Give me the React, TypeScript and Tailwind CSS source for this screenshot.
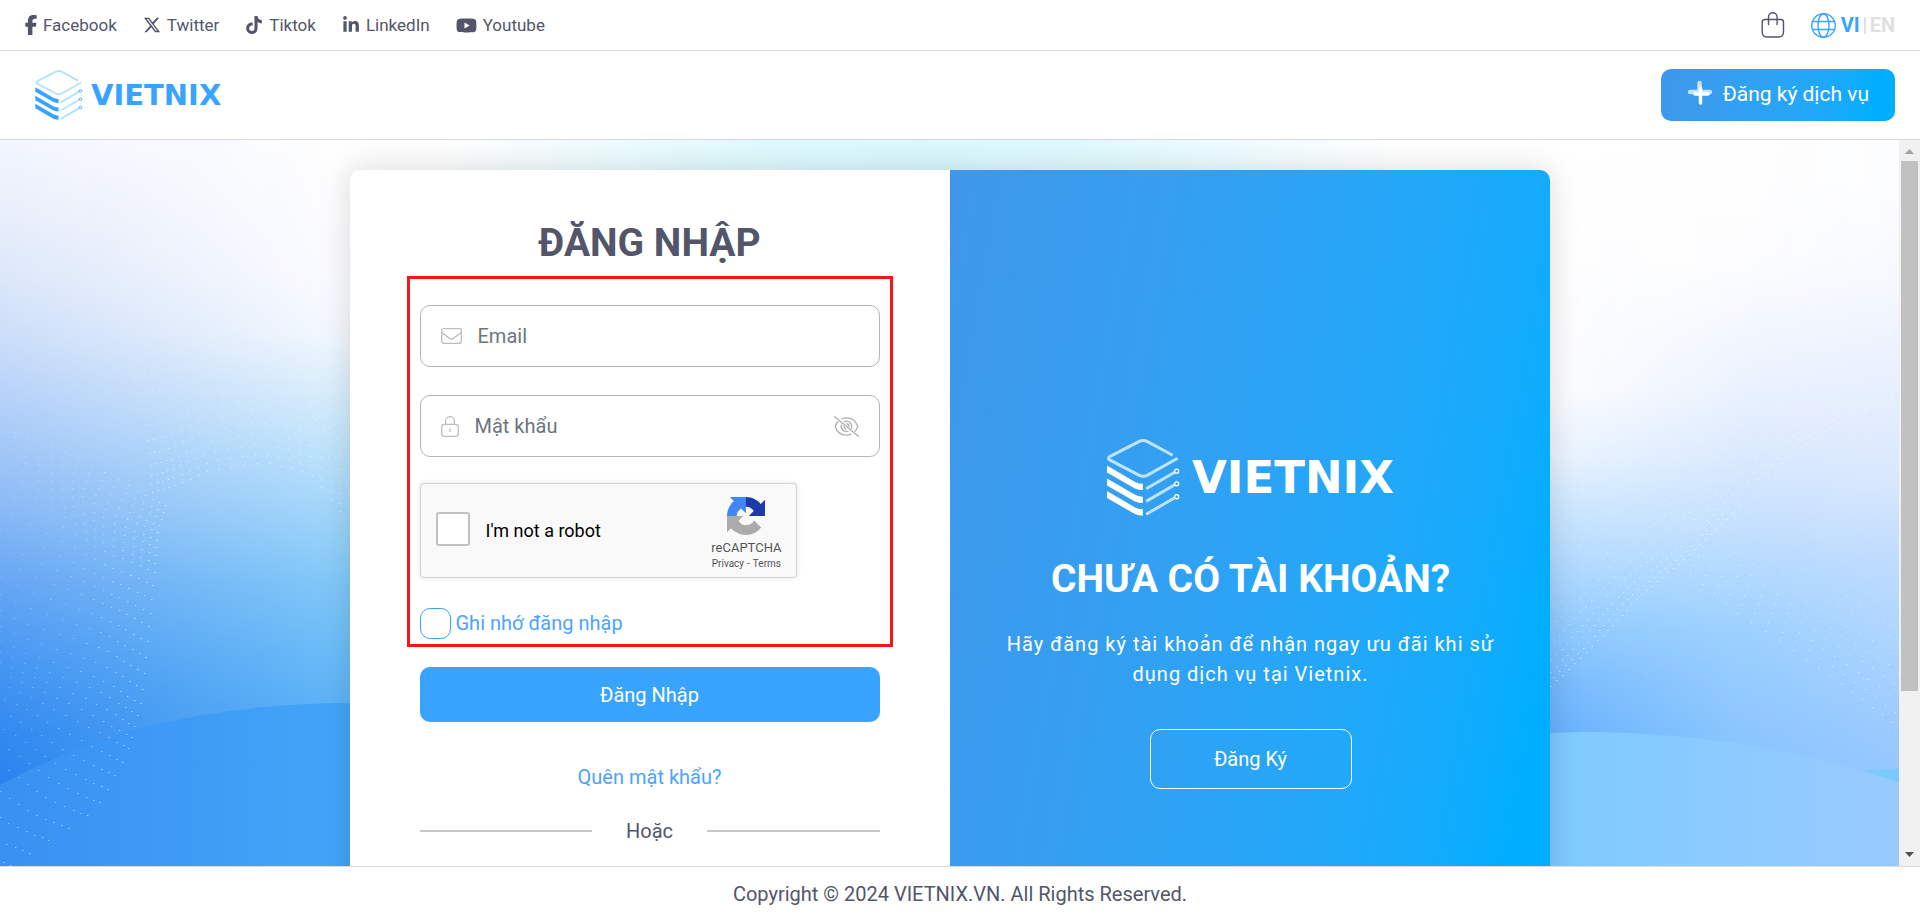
import React from "react";
import { FaFacebookF, FaLinkedinIn, FaTiktok, FaXTwitter, FaYoutube } from "react-icons/fa6";

type Point = [number, number];
type Dot = { x: number; y: number; o: number };

const socials = [
  { label: "Facebook", icon: <FaFacebookF className="-mx-1 size-5" /> },
  { label: "Twitter", icon: <FaXTwitter className="size-[18px]" /> },
  { label: "Tiktok", icon: <FaTiktok className="size-[18px]" /> },
  { label: "LinkedIn", icon: <FaLinkedinIn className="size-[18px]" /> },
  { label: "Youtube", icon: <FaYoutube className="size-[21px]" /> },
];

/** Linear interpolation along a polyline, t in 0..1. */
function along(points: Point[], t: number): Point {
  const f = t * (points.length - 1);
  const i = Math.min(Math.floor(f), points.length - 2);
  const r = f - i;
  return [
    points[i][0] + (points[i + 1][0] - points[i][0]) * r,
    points[i][1] + (points[i + 1][1] - points[i][1]) * r,
  ];
}

/** Fans rows of dots out from an edge curve, in the direction (dx, dy). */
function mesh(edge: Point[], count: number, rows: number, dx: number, dy: number, grow: number): Dot[] {
  const dots: Dot[] = [];
  for (let c = 0; c < count; c++) {
    const [ex, ey] = along(edge, c / (count - 1));
    for (let r = 0; r < rows; r++) {
      const d = r + grow * r * r;
      const sway = (r / rows) * 10;
      dots.push({
        x: ex + dx * d + Math.sin(c / 3 + r / 2) * sway,
        y: ey + dy * d + Math.cos(c / 4 - r / 3) * sway,
        o: 0.5 * (1 - r / rows) + 0.08,
      });
    }
  }
  return dots;
}

const dots: Dot[] = [
  ...mesh([[165, 365], [156, 395], [154, 430], [148, 490], [141, 560], [128, 610], [95, 670], [10, 725]], 32, 18, -6, -3, 0.06),
  ...mesh([[152, 352], [175, 345], [210, 330], [265, 322], [310, 333], [350, 383]], 22, 16, -1, -8, 0.06),
  ...mesh([[1550, 546], [1600, 498], [1640, 455], [1685, 418], [1730, 375], [1790, 315], [1840, 280], [1899, 252]], 60, 11, -3, -4, 0.15),
  ...mesh([[1690, 434], [1740, 475], [1800, 515], [1850, 550], [1892, 582]], 18, 14, 3, -9, 0.03),
];

function Stops({ list }: { list: [number, string][] }) {
  return (
    <>
      {list.map(([y, color]) => (
        <stop key={y} offset={y / 726} stopColor={color} />
      ))}
    </>
  );
}

function Backdrop() {
  return (
    <svg
      className="absolute inset-0 size-full"
      viewBox="0 0 1899 726"
      preserveAspectRatio="none"
      aria-hidden="true"
    >
      <defs>
        <linearGradient id="l0" x1="0" y1="0" x2="0" y2="726" gradientUnits="userSpaceOnUse">
          <Stops list={[[0, "#f3f6ff"], [66, "#eaeffb"], [141, "#dbe7fa"], [207, "#c8dcf9"], [292, "#a9cbf8"], [368, "#8bbaf6"], [444, "#66a6f4"], [519, "#4897f3"], [595, "#3289f0"], [645, "#2a83ed"]]} />
        </linearGradient>
        <linearGradient id="l1" x1="0" y1="0" x2="0" y2="726" gradientUnits="userSpaceOnUse">
          <Stops list={[[0, "#fefefe"], [130, "#fcfcff"], [192, "#f5f9fe"], [242, "#dff0fc"], [302, "#c3e6fb"], [368, "#a5d8fa"], [444, "#82c9f8"], [519, "#6abcf7"], [563, "#60b5f6"]]} />
        </linearGradient>
        <linearGradient id="r0" x1="0" y1="0" x2="0" y2="726" gradientUnits="userSpaceOnUse">
          <Stops list={[[0, "#ffffff"], [250, "#fdfdff"], [318, "#eaf4fe"], [368, "#cde8ff"], [444, "#a8d6ff"], [494, "#8dc9ff"], [544, "#78bbfe"], [590, "#68b3fe"]]} />
        </linearGradient>
        <linearGradient id="r1" x1="0" y1="0" x2="0" y2="726" gradientUnits="userSpaceOnUse">
          <Stops list={[[0, "#fefefe"], [116, "#fdfdff"], [242, "#ecf3fe"], [318, "#dae9fe"], [393, "#c2dffe"], [444, "#aed8ff"], [494, "#9cd0ff"], [595, "#8bc6ff"]]} />
        </linearGradient>
        <linearGradient id="r2" x1="0" y1="0" x2="0" y2="726" gradientUnits="userSpaceOnUse">
          <Stops list={[[40, "#fcfdff"], [141, "#f5f8fe"], [242, "#e7effe"], [343, "#d8e7fe"], [418, "#c0dbff"], [494, "#aed5ff"], [595, "#9bc9ff"], [630, "#96c6ff"]]} />
        </linearGradient>
        <linearGradient id="fadeL" x1="0" y1="0" x2="350" y2="0" gradientUnits="userSpaceOnUse">
          <stop offset="0" stopColor="#000" />
          <stop offset="1" stopColor="#fff" />
        </linearGradient>
        <linearGradient id="fadeM" x1="1550" y1="0" x2="1740" y2="0" gradientUnits="userSpaceOnUse">
          <stop offset="0" stopColor="#000" />
          <stop offset="1" stopColor="#fff" />
        </linearGradient>
        <linearGradient id="fadeR" x1="1740" y1="0" x2="1899" y2="0" gradientUnits="userSpaceOnUse">
          <stop offset="0" stopColor="#000" />
          <stop offset="1" stopColor="#fff" />
        </linearGradient>
        <mask id="mL"><rect width="950" height="726" fill="url(#fadeL)" /></mask>
        <mask id="mM"><rect x="1550" width="349" height="726" fill="url(#fadeM)" /></mask>
        <mask id="mR"><rect x="1740" width="159" height="726" fill="url(#fadeR)" /></mask>
        <radialGradient id="glow" cx="920" cy="60" r="480" gradientUnits="userSpaceOnUse">
          <stop offset="0" stopColor="#d8f8fe" />
          <stop offset=".35" stopColor="#dffafe" />
          <stop offset="1" stopColor="#dffafe" stopOpacity="0" />
        </radialGradient>
        <linearGradient id="hillL" x1="0" y1="0" x2="1" y2="0">
          <stop offset="0" stopColor="#3a90f2" />
          <stop offset="1" stopColor="#42a5f8" />
        </linearGradient>
        <linearGradient id="hillR" x1="0" y1="0" x2="1" y2="0">
          <stop offset="0" stopColor="#7ecbff" />
          <stop offset="1" stopColor="#99caff" />
        </linearGradient>
      </defs>
      <rect width="950" height="726" fill="url(#l0)" />
      <rect width="950" height="726" fill="url(#l1)" mask="url(#mL)" />
      <rect x="950" width="949" height="726" fill="url(#r0)" />
      <rect x="1550" width="349" height="726" fill="url(#r1)" mask="url(#mM)" />
      <rect x="1740" width="159" height="726" fill="url(#r2)" mask="url(#mR)" />
      <rect x="400" width="1050" height="240" fill="url(#glow)" />
      <path d="M0 645 C35 627 80 604 140 588 C210 571 280 563 350 563 V726 H0 Z" fill="url(#hillL)" />
      <path d="M1860 631 Q1880 629 1899 629 V726 H1860 Z" fill="#7ac9ff" />
      <path d="M1550 593 C1640 588 1740 602 1800 615 Q1860 628 1899 643 V726 H1550 Z" fill="url(#hillR)" />
      {dots.map((d, i) => (
        <rect key={i} x={Math.round(d.x)} y={Math.round(d.y)} width="1.4" height="1" fill="#fff" opacity={d.o} />
      ))}
    </svg>
  );
}

function Cube({ className, line, fill }: { className: string; line: string; fill: string }) {
  return (
    <svg className={className} viewBox="0 0 220 232" fill="none" aria-hidden="true">
      <g stroke={line} strokeWidth="9">
        <path d="M198 49 L122 8 Q109 1 96 8 L8 53 Q1 58 8 63 L96 109 Q109 116 122 109 L213 58" />
        <path d="M118 150 L204 100 M118 188 L204 138 M118 227 L204 177" />
      </g>
      <g stroke={fill} strokeWidth="4">
        <circle cx="210" cy="97" r="6" />
        <circle cx="210" cy="135" r="6" />
        <circle cx="210" cy="174" r="6" />
      </g>
      <g fill={fill}>
        <path d="M0 80 L86 130 Q97 135 108 135 V154 Q96 154 84 149 L0 101 Z" />
        <path d="M0 119 L86 169 Q97 174 108 174 V193 Q96 193 84 188 L0 140 Z" />
        <path d="M0 157 L86 207 Q97 212 108 212 V231 Q96 231 84 226 L0 178 Z" />
      </g>
    </svg>
  );
}

function RecaptchaMark() {
  return (
    <svg className="size-[38px]" viewBox="0 0 64 64" aria-hidden="true">
      <path fill="#1c3aa9" d="M64 31.955l-.033-1.37V4.687l-7.16 7.16C50.948 4.674 42.033.093 32.05.093c-10.4 0-19.622 4.96-25.458 12.64l11.736 11.86a15.55 15.55 0 0 1 4.754-5.334c2.05-1.6 4.952-2.906 8.968-2.906.485 0 .86.057 1.135.163 4.976.393 9.288 3.14 11.828 7.124l-8.307 8.307L64 31.953" />
      <path fill="#4285f4" d="M31.862.094l-1.37.033H4.594l7.16 7.16C4.58 13.147 0 22.06 0 32.046c0 10.4 4.96 19.622 12.64 25.458L24.5 45.768a15.55 15.55 0 0 1-5.334-4.754c-1.6-2.05-2.906-4.952-2.906-8.968 0-.485.057-.86.163-1.135.393-4.976 3.14-9.288 7.124-11.828l8.307 8.307L31.86.095" />
      <path fill="#ababab" d="M.001 32.045l.033 1.37v25.898l7.16-7.16c5.86 7.173 14.774 11.754 24.76 11.754 10.4 0 19.622-4.96 25.458-12.64l-11.736-11.86a15.55 15.55 0 0 1-4.754 5.334c-2.05 1.6-4.952 2.906-8.968 2.906-.485 0-.86-.057-1.135-.163-4.976-.393-9.288-3.14-11.828-7.124l8.307-8.307c-10.522.04-22.4.066-27.295-.005" />
    </svg>
  );
}

function TopBar() {
  return (
    <div className="flex h-[51px] shrink-0 items-center justify-between border-b border-[#dcdcdc] px-[25px]">
      <nav className="flex items-center gap-[26px]">
        {socials.map((s) => (
          <a key={s.label} href="#" className="flex items-center gap-[6px] text-[17px] leading-6">
            {s.icon}
            <span>{s.label}</span>
          </a>
        ))}
      </nav>
      <div className="flex items-center gap-[26px]">
        <button type="button" aria-label="Cart">
          <svg className="h-[26px] w-6" viewBox="0 0 24 26" fill="none" stroke="currentColor" strokeWidth="1.4" strokeLinecap="round">
            <path d="M4 7.5 H20 Q22.5 7.500 22.500 10 V20 Q22.500 25 17.500 25 H6 Q1.200 25 1.200 20 V10 Q1.200 7.500 4 7.500 Z" />
            <path d="M7.500 12.500 V5 A4.300 4.300 0 0 1 16.100 5 V12.500" />
          </svg>
        </button>
        <div className="flex items-center gap-[5px] text-xl leading-6 font-bold">
          <svg className="size-[25px] text-[#38a4ff]" viewBox="0 0 25 25" fill="none" stroke="currentColor" strokeWidth="1.400" aria-hidden="true">
            <circle cx="12.500" cy="12.500" r="11.800" />
            <ellipse cx="12.500" cy="12.500" rx="5.500" ry="11.800" />
            <path d="M1.500 8.500 H23.500 M1.500 16.500 H23.500" />
          </svg>
          <div className="flex items-center gap-1">
            <a href="#" className="text-[#38a4ff]">VI</a>
            <span className="h-[17px] w-[2px] bg-[#e0e0e0]" />
            <a href="#" className="text-[#e0e0e0]">EN</a>
          </div>
        </div>
      </div>
    </div>
  );
}

function Header() {
  return (
    <header className="flex h-[89px] shrink-0 items-center justify-between border-b border-[#dcdcdc] pr-[25px] pl-[35px]">
      <a href="#" className="flex items-center gap-2 text-[#38a4ff]">
        <Cube className="h-[50px] w-12" line="#b5e3ff" fill="#38a4ff" />
        <span className="font-['DejaVu_Sans',sans-serif] text-[29px] leading-8 font-bold">VIETNIX</span>
      </a>
      <button
        type="button"
        className="flex h-[52px] items-center gap-[10px] rounded-[10px] bg-linear-100 from-[#3f97ea] to-[#00aeff] to-90% px-[26px] text-[21px] text-white"
      >
        <svg className="-mt-1 size-[26px]" viewBox="0 0 26 26" fill="none" strokeWidth="4.500" strokeLinecap="round" aria-hidden="true">
          <path d="M12.500 3 V13 M3 12 H13 M13 12 H23" stroke="#c5e3ff" />
          <path d="M13.500 8 V23 M8 14 H21" stroke="#fff" strokeWidth="3.500" />
        </svg>
        <span>Đăng ký dịch vụ</span>
      </button>
    </header>
  );
}

function Fields() {
  return (
    <div className="relative flex flex-col">
      <div className="pointer-events-none absolute -inset-x-[13px] -top-[29px] -bottom-2 border-[3px] border-[#fb1414]" />
      <label className="flex h-[62px] items-center gap-4 rounded-[10px] border border-[#b5b5b5] px-5">
        <svg className="h-4 w-[21px] shrink-0 text-[#bdbdbd]" viewBox="0 0 21 16" fill="none" stroke="currentColor" strokeWidth="1.300" aria-hidden="true">
          <rect x=".7" y=".7" width="19.600" height="14.600" rx="2" />
          <path d="M.7 4.500 L9 10.600 Q10.500 11.600 12 10.600 L20.300 4.500" />
        </svg>
        <input type="email" aria-label="Email" placeholder="Email" className="min-w-0 flex-1 bg-transparent text-xl outline-none placeholder:text-[#6c757d]" />
      </label>
      <div className="mt-7 flex h-[62px] items-center gap-4 rounded-[10px] border border-[#b5b5b5] px-5">
        <svg className="h-[21px] w-[18px] shrink-0 text-[#bdbdbd]" viewBox="0 0 18 21" fill="none" stroke="currentColor" strokeWidth="1.300" strokeLinecap="round" aria-hidden="true">
          <rect x=".7" y="8.300" width="16.600" height="12" rx="2.500" />
          <path d="M4.600 8.300 V5 A4.400 4.400 0 0 1 13.400 5 V8.300 M9 12.800 V15.600" />
        </svg>
        <input type="password" aria-label="Mật khẩu" placeholder="Mật khẩu" className="min-w-0 flex-1 bg-transparent text-xl outline-none placeholder:text-[#6c757d]" />
        <button type="button" aria-label="Hiện mật khẩu" className="text-[#b0b0b0]">
          <svg className="h-[21px] w-[25px]" viewBox="0 0 25 21" fill="none" stroke="currentColor" strokeWidth="1.300" strokeLinecap="round">
            <path d="M.7.800 L24.300 20.200" />
            <path d="M3.800 5.800 Q1.800 8 1.200 10.500 C3 16 7.500 19.200 12.500 19.200 Q15 19.200 17.300 18" />
            <path d="M8 2.600 Q10.200 1.800 12.500 1.800 C17.500 1.800 22 5 23.800 10.500 Q23 13 21 15.300" />
            <path d="M7.400 8.800 A5.300 5.300 0 0 0 14 15.300 M10.300 5.700 A5.300 5.300 0 0 1 17.400 12.400" />
            <path d="M12.500 7.800 Q15.200 8 15.200 10.500 M10 10.500 Q10.200 12.500 12 13" />
          </svg>
        </button>
      </div>
      <div className="mt-[26px] flex h-[95px] w-[377px] items-center rounded-[4px] border border-[#d3d3d3] bg-[#f9f9f9] pr-[14px] pl-[15px] shadow-[0_0_4px_1px_rgba(0,0,0,0.08)]">
        <label className="flex flex-1 items-center gap-4 pb-1 text-lg leading-5 text-black">
          <input type="checkbox" className="size-[34px] appearance-none rounded-[3px] border-2 border-[#c1c1c1] bg-white" />
          <span className="pt-1">I'm not a robot</span>
        </label>
        <div className="flex flex-col items-center pt-2 text-[#555555]">
          <RecaptchaMark />
          <span className="mt-[5px] text-[13px] leading-4">reCAPTCHA</span>
          <span className="flex gap-[3px] text-[10px] leading-4">
            <a href="#">Privacy</a>
            <span>-</span>
            <a href="#">Terms</a>
          </span>
        </div>
      </div>
      <label className="mt-[30px] flex items-center gap-[5px] self-start text-xl leading-[31px] text-[#4da3ff]">
        <input type="checkbox" className="size-[31px] appearance-none rounded-[10px] border border-[#38a4ff] bg-white" />
        <span>Ghi nhớ đăng nhập</span>
      </label>
    </div>
  );
}

function LoginCard() {
  return (
    <section className="relative grid min-h-[888px] w-full max-w-[1200px] grid-cols-2 overflow-hidden rounded-[10px] bg-white shadow-[0_0_32px_rgba(0,0,0,0.15)]">
      <form className="flex flex-col px-[70px] pt-12" onSubmit={(e) => e.preventDefault()}>
        <h1 className="mb-[37px] text-center text-[39px] leading-[50px] font-bold">ĐĂNG NHẬP</h1>
        <Fields />
        <button type="submit" className="mt-7 h-[55px] rounded-[10px] bg-[#38a4ff] text-xl text-white">
          Đăng Nhập
        </button>
        <a href="#" className="mt-10 self-center text-xl leading-[30px] text-[#4da3ff]">Quên mật khẩu?</a>
        <div className="mt-6 flex items-center gap-[34px] text-xl leading-[30px]">
          <span className="h-[2px] flex-1 bg-[#c8c8c8]" />
          <span>Hoặc</span>
          <span className="h-[2px] flex-1 bg-[#c8c8c8]" />
        </div>
      </form>
      <div className="flex flex-col items-center justify-center bg-linear-100 from-[#3f97ea] to-[#00aeff] to-90% pr-12 pl-[50px] text-white">
        <div className="flex items-center gap-3">
          <Cube className="h-[77px] w-[73px]" line="#bfe3fd" fill="#ffffff" />
          <span className="font-['DejaVu_Sans',sans-serif] text-[45px] leading-[50px] font-bold">VIETNIX</span>
        </div>
        <h2 className="mt-[38px] text-center text-[39px] leading-[50px] font-bold">CHƯA CÓ TÀI KHOẢN?</h2>
        <p className="mt-[25px] text-center text-xl leading-[30px] tracking-wider">
          Hãy đăng ký tài khoản để nhận ngay ưu đãi khi sử dụng dịch vụ tại Vietnix.
        </p>
        <button type="button" className="mt-10 h-[60px] w-[202px] rounded-[10px] border border-white text-xl">
          Đăng Ký
        </button>
      </div>
    </section>
  );
}

function ScrollTrack() {
  return (
    <div className="flex w-[21px] shrink-0 flex-col items-center bg-[#f1f1f1]" aria-hidden="true">
      <svg className="h-[21px] w-[21px] shrink-0" viewBox="0 0 21 21"><path d="M6 14 L10.500 9 L15 14 Z" fill="#a3a3a3" /></svg>
      <div className="w-[17px] flex-[530] bg-[#c1c1c1]" />
      <div className="flex-[154]" />
      <svg className="h-[21px] w-[21px] shrink-0" viewBox="0 0 21 21"><path d="M6 7 L10.500 12 L15 7 Z" fill="#505050" /></svg>
    </div>
  );
}

export default function App() {
  return (
    <div className="flex h-screen flex-col bg-white font-[Roboto,'Noto_Sans',sans-serif] text-[#53566a]">
      <TopBar />
      <Header />
      <div className="flex min-h-0 flex-1">
        <main className="relative flex min-w-0 flex-1 items-start justify-center overflow-hidden pt-[30px]">
          <Backdrop />
          <LoginCard />
        </main>
        <ScrollTrack />
      </div>
      <footer className="flex h-[55px] shrink-0 items-center justify-center border-t border-[#dcdcdc] text-xl">
        Copyright © 2024 VIETNIX.VN. All Rights Reserved.
      </footer>
    </div>
  );
}
